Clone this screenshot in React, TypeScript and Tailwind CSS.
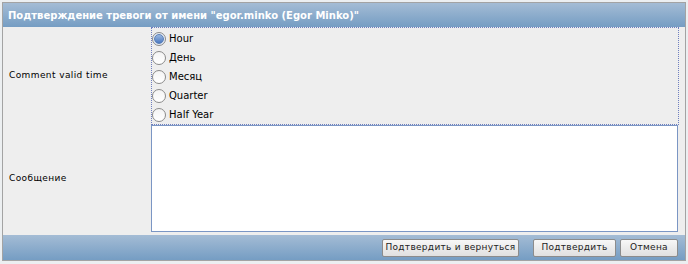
import React from "react";

const Radio = ({ checked, label }: { checked?: boolean; label: string }) => (
  <div className="flex items-center h-[19px]">
    <div
      className={
        "w-[14px] h-[14px] rounded-full border border-[#8a8a8a] flex items-center justify-center " +
        (checked ? "bg-[#e6ecf5]" : "bg-gradient-to-b from-[#f4f4f4] to-[#ffffff]")
      }
    >
      {checked && (
        <div className="w-[10px] h-[10px] rounded-full bg-gradient-to-b from-[#9bb8e0] to-[#4a78c0] border border-[#5b7fb6]" />
      )}
    </div>
    <span className="ml-[3px] text-[10px] text-black">{label}</span>
  </div>
);

const Btn = ({ children, w }: { children: React.ReactNode; w: string }) => (
  <button
    className={
      "h-[18px] rounded-[2px] border border-[#8c8c8c] bg-gradient-to-b from-[#f7f7f7] to-[#e0e0e0] text-[9px] tracking-[0.3px] text-[#222] leading-none whitespace-nowrap px-0 " +
      w
    }
  >
    {children}
  </button>
);

export default function App() {
  return (
    <div
      className="w-[688px] h-[264px] bg-[#eceff1] pt-[2px] pl-[2px]"
      style={{ fontFamily: '"DejaVu Sans", sans-serif' }}
    >
      <div className="w-[684px] border border-[#a3a3a3] bg-[#eeeeee] flex flex-col">
        <div className="h-[24px] bg-gradient-to-b from-[#a4bcd5] to-[#759dc3] flex items-center pl-[5px]">
          <span className="text-white font-bold text-[10px]">
            Подтверждение тревоги от имени "egor.minko (Egor Minko)"
          </span>
        </div>
        <div className="flex">
          <div className="w-[148px] flex items-center pl-[6px] text-[9px] text-black tracking-[0.4px]">
            Comment valid time
          </div>
          <div className="w-[528px] border border-dotted border-[#6f7fbf] pt-[1px] pb-[0px]">
            <Radio checked label="Hour" />
            <Radio label="День" />
            <Radio label="Месяц" />
            <Radio label="Quarter" />
            <Radio label="Half Year" />
          </div>
        </div>
        <div className="flex pb-[3px]">
          <div className="w-[148px] flex items-center pl-[6px] text-[9px] text-black tracking-[0.4px]">
            Сообщение
          </div>
          <div className="w-[527px] h-[107px] border border-[#7b96c4] bg-white relative">
            <div className="absolute right-[1px] bottom-[1px] w-[7px] h-[7px] opacity-60"
              style={{ backgroundImage: "radial-gradient(#888 0.6px, transparent 0.7px)", backgroundSize: "2px 2px" }} />
          </div>
        </div>
        <div className="h-[25px] bg-gradient-to-b from-[#a4bcd5] to-[#759dc3] flex items-center justify-end gap-[4px] pr-[7px]">
          <Btn w="w-[137px] mr-[10px]">Подтвердить и вернуться</Btn>
          <Btn w="w-[83px]">Подтвердить</Btn>
          <Btn w="w-[58px]">Отмена</Btn>
        </div>
      </div>
    </div>
  );
}
